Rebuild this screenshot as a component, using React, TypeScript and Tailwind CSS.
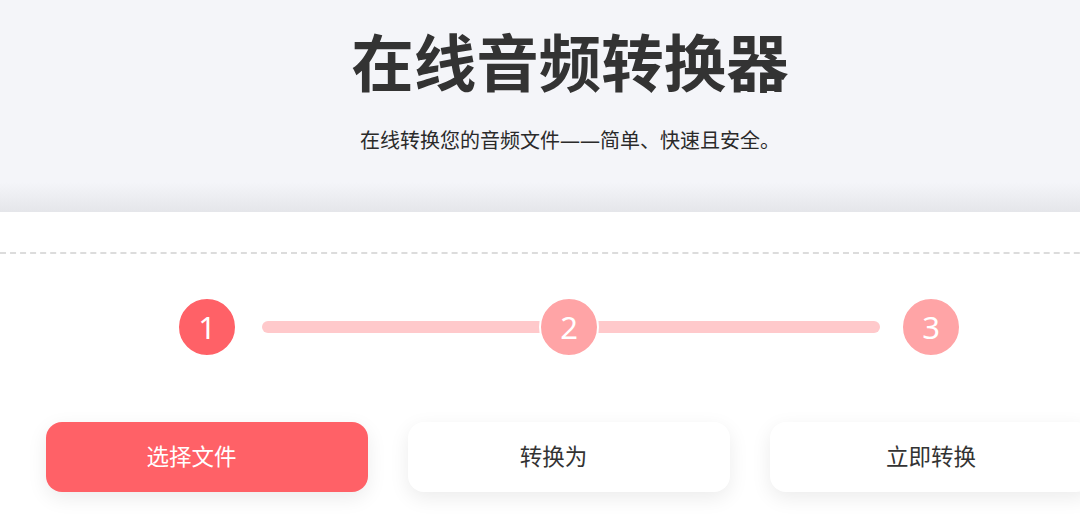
import React from "react";

const font = { fontFamily: '"Noto Sans", "Noto Sans CJK SC", sans-serif' };

const steps = [
  { n: "1", active: true },
  { n: "2", active: false },
  { n: "3", active: false },
];

const actions = [
  { label: "选择文件", primary: true, shift: true },
  { label: "转换为", primary: false, shift: true },
  { label: "立即转换", primary: false, shift: false },
];

export default function App() {
  return (
    <div className="h-[514px] w-[1080px] overflow-hidden bg-white text-[#333]" style={font}>
      <div className="w-[1140px]">
        <header className="flex h-[212px] flex-col items-center bg-[linear-gradient(to_bottom,#f4f5f9_0%,#f4f5f9_86%,#e5e6ea_100%)] pt-[22px]">
          <h1 className="text-[62.5px] font-bold leading-[82px] text-[#333]">在线音频转换器</h1>
          <p className="mt-[23px] text-[20px] leading-[28px] text-[#2a2a2a]">
            在线转换您的音频文件——简单、快速且安全。
          </p>
        </header>

        <section className="pt-[40px]">
          <div className="border-t-2 border-dashed border-[#dcdcdc] pt-[45px]">
            <div className="relative pl-[46px]">
              <div className="absolute left-[262px] top-[22px] h-[12px] w-[618px] rounded-full bg-[#ffc9cb]" />
              <div className="relative grid grid-cols-[322px_322px_322px] gap-[40px]">
                {steps.map((s) => (
                  <div key={s.n} className="flex justify-center">
                    <div
                      className={`-m-[2px] flex h-[60px] w-[60px] items-center justify-center rounded-full border-2 border-white text-[31px] leading-none text-white ${
                        s.active ? "bg-[#ff6167]" : "bg-[#ffa4a6]"
                      }`}
                    >
                      {s.n}
                    </div>
                  </div>
                ))}
              </div>
            </div>

            <div className="mt-[67px] grid grid-cols-[322px_322px_322px] gap-[40px] pl-[46px]">
              {actions.map((a) => (
                <button
                  key={a.label}
                  className={`flex h-[70px] items-center justify-center rounded-2xl text-[22.5px] leading-none shadow-[0_6px_20px_rgba(0,0,0,0.08)] ${
                    a.primary ? "bg-[#ff6167] text-white" : "bg-white text-[#333]"
                  } ${a.shift ? "pr-[31px]" : ""}`}
                >
                  {a.label}
                </button>
              ))}
            </div>
          </div>
        </section>
      </div>
    </div>
  );
}
